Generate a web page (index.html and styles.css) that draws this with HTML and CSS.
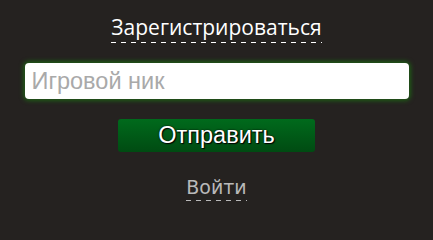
FILE: index.html
```html
<!DOCTYPE html>
<html lang="ru">
<head>
<meta charset="utf-8">
<link rel="stylesheet" href="styles.css">
</head>
<body>
<div class="page">
  <a class="title dashed">Зарегистрироваться</a>
  <input class="nick" type="text" placeholder="Игровой ник">
  <button class="send">Отправить</button>
  <a class="login dashed">Войти</a>
</div>
</body>
</html>
```
FILE: styles.css
```css
html, body {
  margin: 0;
  padding: 0;
  background: #252220;
}
.page {
  display: flex;
  flex-direction: column;
  align-items: center;
  padding-top: 14px;
}
.dashed {
  padding-bottom: 3px;
  background-image: repeating-linear-gradient(to right, currentColor 0 5px, transparent 5px 10px);
  background-size: 100% 1px;
  background-position: left bottom;
  background-repeat: no-repeat;
}
.title {
  font-family: "Open Sans", sans-serif;
  font-size: 21px;
  line-height: 26px;
  color: #ffffff;
}
.nick {
  box-sizing: border-box;
  margin-top: 20px;
  width: 384px;
  height: 36px;
  border: none;
  border-radius: 4px;
  background: #ffffff;
  box-shadow: 0 0 4px 2px #1f5a16;
  padding: 0 7px;
  font-family: "Liberation Sans", Arial, sans-serif;
  font-size: 23.5px;
  color: #333;
  outline: none;
}
.nick::placeholder {
  color: #a9a9a9;
}
.send {
  margin-top: 20px;
  width: 197px;
  height: 33px;
  border: none;
  border-radius: 3px;
  background: linear-gradient(#006a1c, #004b12);
  color: #ffffff;
  font-family: "Liberation Sans", Arial, sans-serif;
  font-size: 23.5px;
  text-shadow: 0 0 2px #000, 1px 1px 1px #000;
  padding: 0;
}
.login {
  margin-top: 24px;
  font-family: "DejaVu Sans", sans-serif;
  font-size: 19px;
  line-height: 22px;
  color: #b9b9b9;
}
```
